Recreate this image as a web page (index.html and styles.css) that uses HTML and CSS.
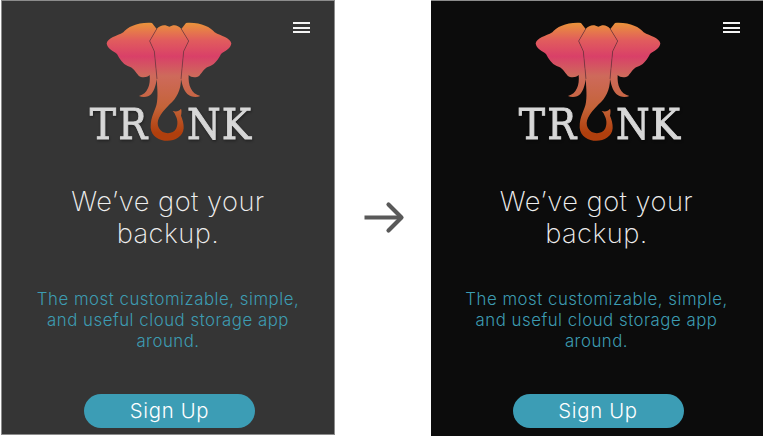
FILE: index.html
```
<!DOCTYPE html>
<html lang="en">
<head>
<meta charset="utf-8">
<title>Trunk</title>
<link rel="stylesheet" href="styles.css">
</head>
<body>
<svg class="defs" aria-hidden="true">
  <defs>
    <linearGradient id="coat" gradientUnits="userSpaceOnUse" x1="0" y1="38" x2="0" y2="393">
      <stop class="c1" offset="0"/>
      <stop class="c2" offset=".15"/>
      <stop class="c3" offset=".285"/>
      <stop class="c4" offset=".45"/>
      <stop class="c5" offset=".72"/>
      <stop class="c6" offset=".93"/>
    </linearGradient>
    <symbol id="logo" viewBox="0 0 540 420">
      <g fill="url(#coat)">
        <path d="M216 39 C174 36 143 51 130 67 C110 79 84 83 80 100 C81 116 100 123 111 132 C119 148 128 161 143 168 C160 172 167 187 176 197 C185 204 201 203 209 195 C212 225 203 251 177 258 C188 263 206 262 214 252 C225 239 227 223 231 207 L223 124 L209 93 L230 57 Z"/>
        <path d="M318 39 C360 36 391 51 404 67 C424 79 450 83 454 100 C453 116 434 123 423 132 C415 148 406 161 391 168 C374 172 367 187 358 197 C349 204 333 203 326 195 C324 225 333 251 361 258 C350 263 332 262 322 252 C309 239 307 223 303 207 L311 124 L326 93 L304 57 Z"/>
        <path d="M230 57 C242 43 256 43 268 50 C280 43 293 43 304 57 L326 93 L311 124 L303 207 C303 240 290 265 269 283 C239 313 226 335 237 355 C247 374 280 375 289 355 C295 340 292 326 287 317 Q284 308 278 303 C289 306 297 304 303 296 Q306 302 303 317 C307 327 312 341 311 355 C307 405 216 405 212 353 C211 317 228 301 231 276 C235 250 230 226 231 207 L223 124 L209 93 Z"/>
      </g>
      <path class="seam" d="M230 57 L209 93 L223 124 L231 207 M304 57 L326 93 L311 124 L303 207"/>
      <g class="wordmark">
        <text x="29" y="387" textLength="79" lengthAdjust="spacingAndGlyphs">T</text>
        <text x="115" y="387" textLength="87" lengthAdjust="spacingAndGlyphs">R</text>
        <text x="321" y="387" textLength="101" lengthAdjust="spacingAndGlyphs">N</text>
        <text x="425" y="387" textLength="88" lengthAdjust="spacingAndGlyphs">K</text>
      </g>
    </symbol>
  </defs>
</svg>
<main class="compare">
  <section class="phone">
    <div class="menu"><i></i><i></i><i></i></div>
    <svg class="logo"><use href="#logo"/></svg>
    <h1>We’ve got your<br>backup.</h1>
    <p>The most customizable, simple,<br>and useful cloud storage app<br>around.</p>
    <a class="button">Sign Up</a>
  </section>
  <svg class="arrow" viewBox="0 0 96 46"><path class="shaft" d="M29.5 23.5H66"/><path class="head" d="M53.5 10.5 L66.5 23.5 L53.5 36.5"/></svg>
  <section class="phone dark">
    <div class="menu"><i></i><i></i><i></i></div>
    <svg class="logo"><use href="#logo"/></svg>
    <h1>We’ve got your<br>backup.</h1>
    <p>The most customizable, simple,<br>and useful cloud storage app<br>around.</p>
    <a class="button">Sign Up</a>
  </section>
</main>
</body>
</html>
```
FILE: styles.css
```
* { box-sizing: border-box; }
body { margin: 0; background: #fff; overflow: hidden; font-family: Inter, "Liberation Sans", sans-serif; }
.defs { position: absolute; width: 0; height: 0; }
.c1 { stop-color: #ea943a; }
.c2 { stop-color: #e15c5d; }
.c3 { stop-color: #d94068; }
.c4 { stop-color: #ce6a5b; }
.c5 { stop-color: #c46338; }
.c6 { stop-color: #b03f0d; }
.seam { fill: none; stroke: #6b343e; stroke-width: 2; }
.wordmark { fill: #d7d7d7; stroke: #d7d7d7; stroke-width: 2.8; font: 128px "DejaVu Serif", serif; filter: drop-shadow(2px 4px 3px #0006); }
.compare { display: flex; height: 436px; overflow: hidden; }
.phone {
  position: relative; flex: none; width: 334px; height: 435px; margin-left: 1px;
  border: 1px solid #8c8c8c; background: #353535;
  display: flex; flex-direction: column; align-items: center;
}
.dark { height: 436px; margin: 0; padding-right: 3px; border-width: 1px 0 0; background: #0c0c0c; }
.menu { position: absolute; right: 24px; top: 21px; width: 17px; display: grid; gap: 2.5px; }
.menu i { height: 2px; background: #f4f4f4; }
.dark .menu { right: 25px; }
.logo { flex: none; width: 180px; height: 140px; margin: 9px 0 0 4px; }
h1 { margin: 36px 0 0; font-size: 27.3px; line-height: 32px; font-weight: 200; letter-spacing: .45px; color: #efefef; text-align: center; white-space: nowrap; }
p { margin: 38.5px 0 0; font-size: 16.8px; line-height: 21.4px; font-weight: 300; letter-spacing: .53px; color: #3d9cb2; text-align: center; white-space: nowrap; }
.button { width: 171px; height: 34px; margin: 41.3px 0 0 3px; border-radius: 17px; background: #3c9db5; color: #fff; font-size: 20.3px; line-height: 34px; font-weight: 300; letter-spacing: .7px; text-align: center; }
.arrow { flex: none; width: 96px; height: 46px; margin-top: 194px; fill: none; stroke: #595959; }
.shaft { stroke-width: 4.2; }
.head { stroke-width: 4.2; stroke-linecap: round; stroke-linejoin: round; }
```
